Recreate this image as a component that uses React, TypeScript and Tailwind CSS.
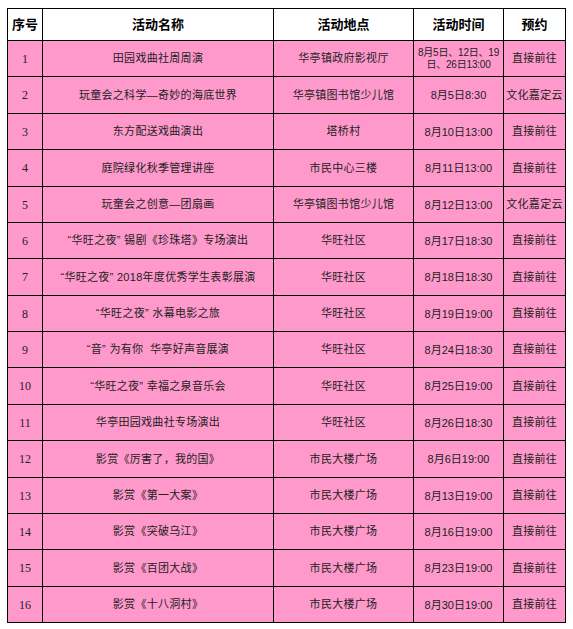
const rows: [string, string, string, string][] = [
  ["田园戏曲社周周演", "华亭镇政府影视厅", "", "直接前往"],
  ["玩童会之科学—奇妙的海底世界", "华亭镇图书馆少儿馆", "8月5日8:30", "文化嘉定云"],
  ["东方配送戏曲演出", "塔桥村", "8月10日13:00", "直接前往"],
  ["庭院绿化秋季管理讲座", "市民中心三楼", "8月11日13:00", "直接前往"],
  ["玩童会之创意—团扇画", "华亭镇图书馆少儿馆", "8月12日13:00", "文化嘉定云"],
  ["“华旺之夜” 锡剧《珍珠塔》专场演出", "华旺社区", "8月17日18:30", "直接前往"],
  ["“华旺之夜” 2018年度优秀学生表彰展演", "华旺社区", "8月18日18:30", "直接前往"],
  ["“华旺之夜” 水幕电影之旅", "华旺社区", "8月19日19:00", "直接前往"],
  ["“音” 为有你  华亭好声音展演", "华旺社区", "8月24日18:30", "直接前往"],
  ["“华旺之夜” 幸福之泉音乐会", "华旺社区", "8月25日19:00", "直接前往"],
  ["华亭田园戏曲社专场演出", "华旺社区", "8月26日18:30", "直接前往"],
  ["影赏《厉害了，我的国》", "市民大楼广场", "8月6日19:00", "直接前往"],
  ["影赏《第一大案》", "市民大楼广场", "8月13日19:00", "直接前往"],
  ["影赏《突破乌江》", "市民大楼广场", "8月16日19:00", "直接前往"],
  ["影赏《百团大战》", "市民大楼广场", "8月23日19:00", "直接前往"],
  ["影赏《十八洞村》", "市民大楼广场", "8月30日19:00", "直接前往"],
];

const headers = ["序号", "活动名称", "活动地点", "活动时间", "预约"];

const cell = "flex items-center justify-center text-center bg-[#ff99cc] text-[11px] text-[#222]";

export default function App() {
  return (
    <div className="bg-white w-[573px] h-[629px] pt-[8px] pl-[7px] font-['Liberation_Sans','Noto_Sans_CJK_SC',sans-serif]">
      <div className="grid w-[559px] bg-black p-px gap-px grid-cols-[34px_230px_139px_89px_61px] grid-rows-[31px_35px_36px_35px_36px_35px_35px_36px_35px_35px_36px_35px_36px_35px_35px_36px_35px]">
        {headers.map((h) => (
          <div key={h} className="flex items-center justify-center bg-white text-[13px] font-bold text-black">
            {h}
          </div>
        ))}
        {rows.map((r, i) => (
          <div key={i} className="contents">
            <div className={`${cell} font-['Liberation_Serif',serif] text-[12px]`}>{i + 1}</div>
            <div className={`${cell} whitespace-pre tracking-[0.3px]`}>{r[0]}</div>
            <div className={`${cell} tracking-[0.3px]`}>{r[1]}</div>
            <div className={`${cell} leading-[12px]`}>
              {i === 0 ? (
                <span className="whitespace-nowrap text-[10px] tracking-[-0.2px]">
                  8月5日、12日、19
                  <br />
                  日、26日13:00
                </span>
              ) : (
                r[2]
              )}
            </div>
            <div className={`${cell} tracking-[0.3px]`}>{r[3]}</div>
          </div>
        ))}
      </div>
    </div>
  );
}
